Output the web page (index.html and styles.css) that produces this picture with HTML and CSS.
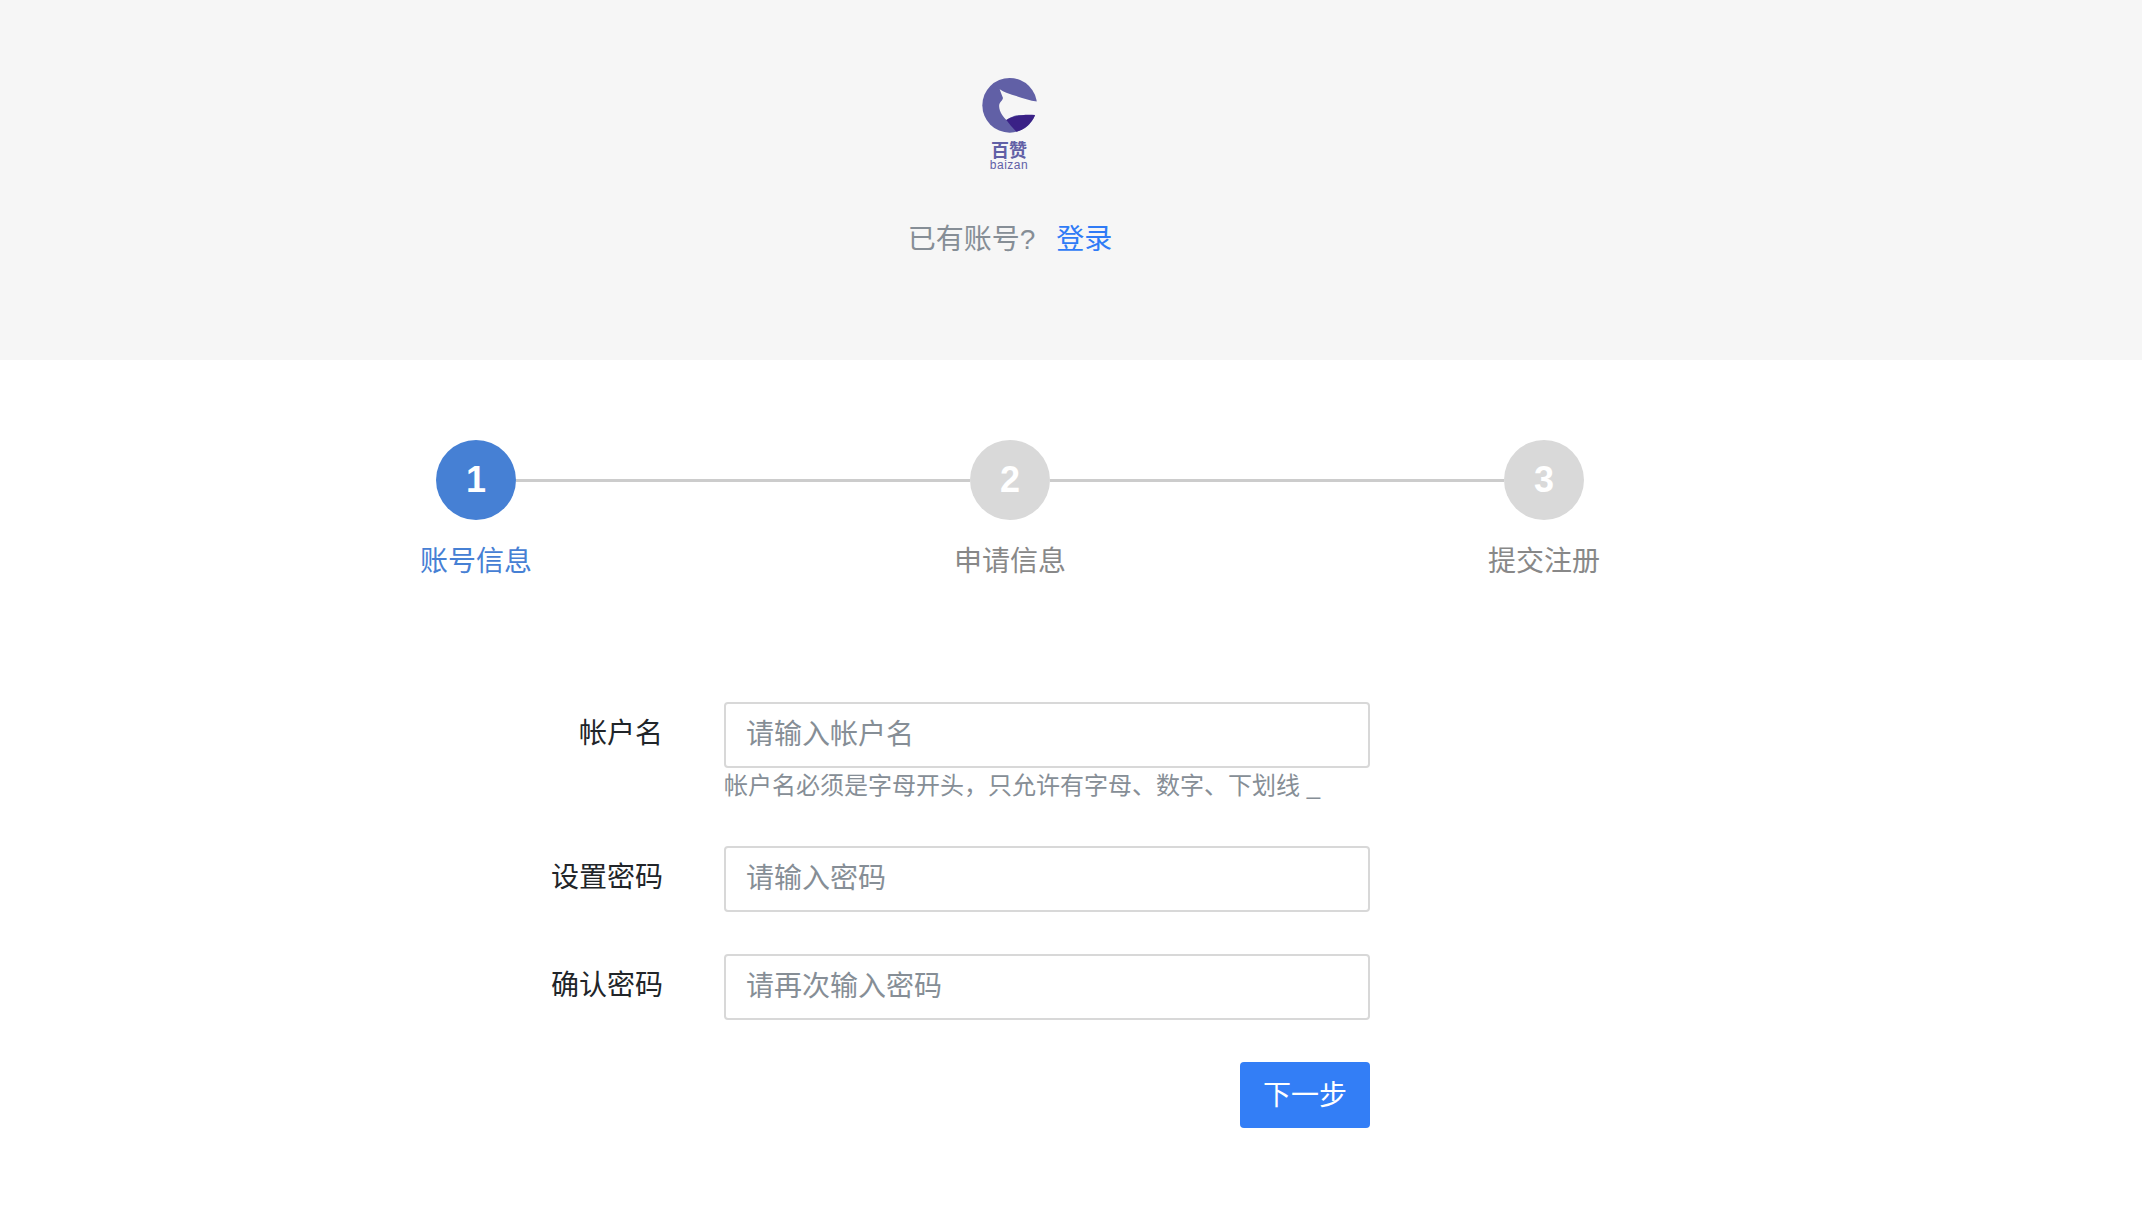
FILE: index.html
```html
<!DOCTYPE html>
<html lang="zh-CN">
<head>
  <meta charset="UTF-8">
  <meta name="viewport" content="width=device-width, initial-scale=1.0">
  <title>百赞 - 注册</title>
  <link rel="stylesheet" href="styles.css">
</head>
<body>
  <header class="header">
    <div class="logo">
      <svg class="logo-mark" viewBox="0 0 165 165" width="55" height="55" aria-hidden="true">
        <circle cx="83" cy="82" r="82" fill="#6160a6"/>
        <path d="M53 34 C60 38 66 42 73 44 C100 53 135 66 166 71 L172 112 L110 111 C95 113 84 119 73 126 C64 117 58 108 54 98 C51 88 50 80 54 74 C58 69 62 66 63 60 C60 52 56 43 53 34 Z" fill="#f6f6f6"/>
        <path d="M73 126 C90 115 125 107 159 111 C150 135 127 156 103 161 C92 150 82 138 73 126 Z" fill="#3a2186"/>
      </svg>
      <span class="logo-name">百赞</span>
      <span class="logo-sub">baizan</span>
    </div>
    <p class="login-tip">已有账号? <a href="#">登录</a></p>
  </header>

  <div class="steps">
    <div class="step-num active">1</div>
    <div class="step-line"></div>
    <div class="step-num">2</div>
    <div class="step-line"></div>
    <div class="step-num">3</div>
    <div class="step-label active">账号信息</div>
    <div class="step-label step-label-2">申请信息</div>
    <div class="step-label step-label-3">提交注册</div>
  </div>

  <form class="form">
    <div class="form-row">
      <label class="form-label" for="account">帐户名</label>
      <div class="form-field">
        <input class="form-input" type="text" id="account" placeholder="请输入帐户名">
        <p class="form-hint">帐户名必须是字母开头，只允许有字母、数字、下划线 _</p>
      </div>
    </div>
    <div class="form-row">
      <label class="form-label" for="password">设置密码</label>
      <div class="form-field">
        <input class="form-input" type="password" id="password" placeholder="请输入密码">
      </div>
    </div>
    <div class="form-row">
      <label class="form-label" for="confirm">确认密码</label>
      <div class="form-field">
        <input class="form-input" type="password" id="confirm" placeholder="请再次输入密码">
      </div>
    </div>
    <div class="form-actions">
      <button class="btn-next" type="button">下一步</button>
    </div>
  </form>
</body>
</html>
```

FILE: styles.css
```css
* { box-sizing: border-box; }
body { margin: 0; background: #fff; color: #212529; font-family: "Liberation Sans", "Noto Sans CJK SC", sans-serif; font-size: 28px; }

.header { height: 360px; padding: 78px 124px 0 0; background: #f6f6f6; display: flex; flex-direction: column; align-items: center; }
.logo { display: flex; flex-direction: column; align-items: center; color: #6160a6; }
.logo-mark { display: block; }
.logo-name { margin-top: 6px; font-size: 18px; line-height: 24px; font-weight: 700; }
.logo-sub { margin-top: -2px; font-size: 12px; line-height: 8px; letter-spacing: 0.5px; }
.login-tip { margin: 51px 0 0 2px; line-height: 40px; color: #868e96; word-spacing: 13px; }
.login-tip a { color: #2f7bf6; text-decoration: none; }

.steps { width: 1148px; margin: 80px 0 0 436px; display: grid; grid-template-columns: 80px 1fr 80px 1fr 80px; row-gap: 22px; align-items: center; }
.step-num { height: 80px; border-radius: 50%; background: #d9d9d9; color: #fff; font-size: 36px; font-weight: 700; line-height: 80px; text-align: center; }
.step-num.active { background: #4680d4; }
.step-line { height: 3px; margin-top: 1px; background: #ccc; }
.step-label { grid-column: 1; justify-self: center; white-space: nowrap; line-height: 40px; color: #888; }
.step-label.active { color: #4680d4; }
.step-label-2 { grid-row: 2; grid-column: 3; }
.step-label-3 { grid-row: 2; grid-column: 5; }

.form { width: 870px; margin: 120px 0 0 500px; }
.form-row { display: grid; grid-template-columns: 163px 646px; column-gap: 61px; margin-bottom: 42px; }
.form-label { text-align: right; line-height: 64px; }
.form-input { display: block; width: 100%; height: 66px; padding: 0 20px; border: 2px solid #d8d8d8; border-radius: 4px; background: #fff; font: inherit; color: #212529; outline: none; }
.form-input::placeholder { color: #868e96; opacity: 1; }
.form-hint { margin: 0; height: 36px; font-size: 24px; line-height: 36px; color: #868e96; }
.form-actions { display: flex; justify-content: flex-end; margin-top: 42px; }
.btn-next { width: 130px; height: 66px; padding: 0 0 4px; border: 0; border-radius: 4px; background: #337ef6; color: #fff; font: inherit; cursor: pointer; }
```
